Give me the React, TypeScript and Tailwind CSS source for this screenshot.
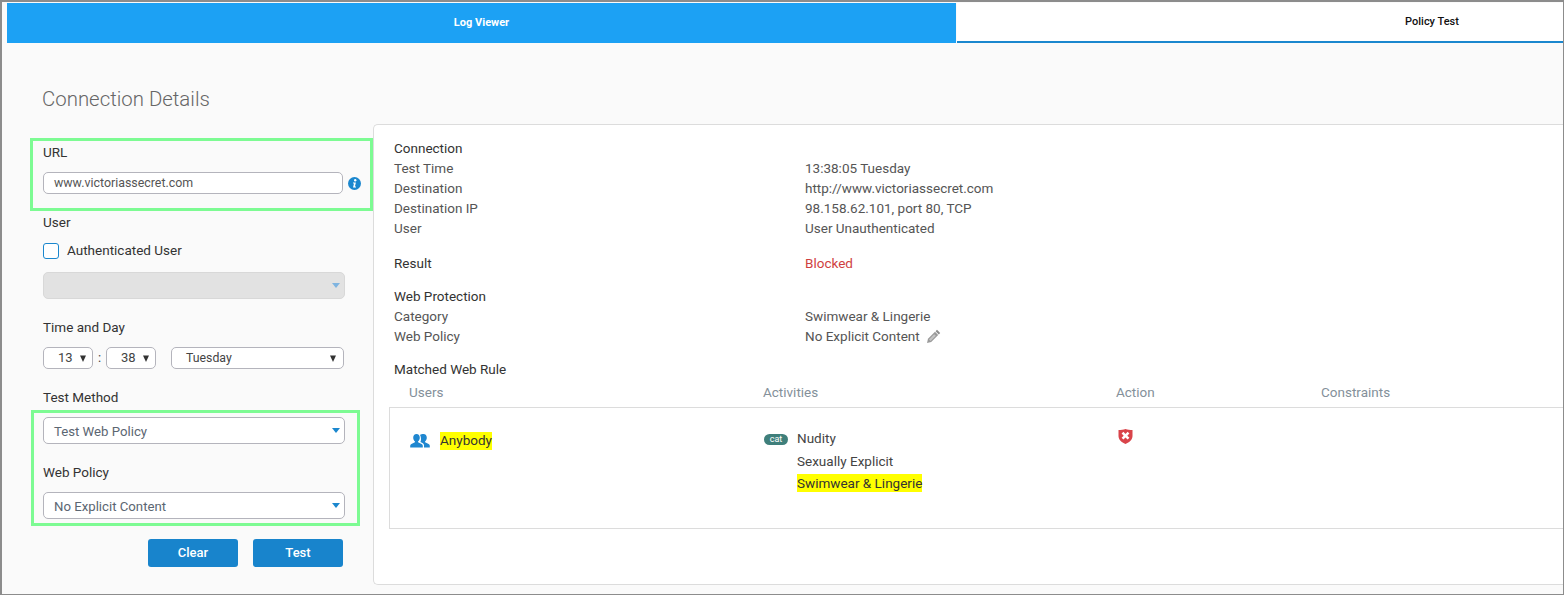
import type { ReactNode } from "react";

const Arrow = ({ color = "#1b87ce" }: { color?: string }) => (
  <svg width="8" height="5" viewBox="0 0 8 5" className="shrink-0">
    <path d="M0 0H8L4 5Z" fill={color} />
  </svg>
);

const SmallArrow = () => (
  <svg width="6" height="7" viewBox="0 0 6 7" className="shrink-0">
    <path d="M0 .5H6L3 7Z" fill="#333" />
  </svg>
);

function Label({ children, className = "" }: { children: ReactNode; className?: string }) {
  return <div className={`text-[13.5px] leading-5 text-[#333] ${className}`}>{children}</div>;
}

function BlueSelect({ value }: { value: string }) {
  return (
    <div className="flex items-center justify-between h-[27px] w-[302px] pl-[10px] pr-[4px] bg-white border border-[#b4b4bc] rounded-[5px] text-[13.2px] text-[#5b6672]">
      <span className="pt-[2px]">{value}</span>
      <span className="flex pb-px"><Arrow /></span>
    </div>
  );
}

function SmallSelect({ value, className }: { value: string; className: string }) {
  return (
    <div className={`flex items-center justify-between h-[22px] bg-white border border-[#b4b4bc] rounded-[5px] text-[#444] ${className}`}>
      <span>{value}</span>
      <SmallArrow />
    </div>
  );
}

function Row({ label, children }: { label: string; children: ReactNode }) {
  return (
    <div className="grid grid-cols-[411px_1fr] h-5 items-center text-[13.5px] text-[#555]">
      <span>{label}</span>
      <span>{children}</span>
    </div>
  );
}

export default function App() {
  return (
    <div className="w-[1564px] h-[595px] overflow-hidden bg-[#fafafa] border-t-2 border-l-2 border-r border-b border-[#8c8c8c] font-['Roboto',sans-serif]">
      {/* tabs */}
      <div className="flex h-[41px] ml-[5px] pt-px text-[11px]">
        <div className="w-[949px] flex items-center justify-center bg-[#1ca1f4] text-white font-bold">Log Viewer</div>
        <div className="flex-1 ml-px flex items-center justify-center pl-[344px] bg-white border-b-2 border-[#1b87ce] text-[#111] font-medium">Policy Test</div>
      </div>

      <div className="flex">
        {/* left form */}
        <div className="w-[371px] pl-[29px] shrink-0">
          <div className="h-[95px] pt-[42px] pl-[11px] text-[20.4px] leading-7 font-light text-[#666]">Connection Details</div>

          <div className="w-[343px] h-[73px] -ml-px border-[3px] border-[#7dfb93] pl-[10px] pt-[1px]">
            <Label>URL</Label>
            <div className="flex items-center gap-[5px] mt-[10px]">
              <div className="flex items-center w-[300px] h-[22px] pl-[10px] bg-white border border-[#b4b4bc] rounded-[5px] text-[12.4px] text-[#555]">www.victoriassecret.com</div>
              <svg width="13" height="13" viewBox="0 0 13 13">
                <circle cx="6.5" cy="6.5" r="6.5" fill="#1b87ce" />
                <circle cx="7.2" cy="3.2" r="1.2" fill="#fff" />
                <path d="M5 5.6H7.9L6.9 9.6H8V10.5H5L6 6.5H5Z" fill="#fff" />
              </svg>
            </div>
          </div>

          <div className="pl-3">
            <Label className="mt-[1px]">User</Label>
            <div className="flex items-center gap-2 mt-[11px] h-4">
              <span className="w-4 h-4 border-[1.5px] border-[#1b87ce] rounded-[3px] bg-white" />
              <span className="pb-[2px] text-[13.5px] text-[#333]">Authenticated User</span>
            </div>
            <div className="flex items-center justify-end h-[27px] w-[302px] mt-[13px] pr-[4px] bg-[#e2e2e2] border border-[#d8d8d8] rounded-[5px]">
              <Arrow color="#7fb4e0" />
            </div>
            <Label className="mt-[18px]">Time and Day</Label>
            <div className="flex items-center mt-[10px]">
              <SmallSelect value="13" className="w-[50px] pl-[14px] pr-[6px] text-[13px]" />
              <span className="w-[13px] text-center text-[13px] text-[#444]">:</span>
              <SmallSelect value="38" className="w-[50px] pl-[14px] pr-[6px] text-[13px]" />
              <SmallSelect value="Tuesday" className="w-[173px] ml-[15px] pl-[14px] pr-[7px] text-[12.3px]" />
            </div>
            <Label className="mt-[18px]">Test Method</Label>
          </div>

          <div className="w-[329px] h-[116px] mt-[3px] border-[3px] border-[#7dfb93] pl-[9px] pt-1">
            <BlueSelect value="Test Web Policy" />
            <Label className="mt-[18px]">Web Policy</Label>
            <div className="mt-[10px]"><BlueSelect value="No Explicit Content" /></div>
          </div>

          <div className="flex gap-[15px] ml-[117px] mt-[13px]">
            <button className="w-[90px] h-[28px] bg-[#1884cc] rounded-[3px] text-white text-[13px] font-medium">Clear</button>
            <button className="w-[90px] h-[28px] bg-[#1884cc] rounded-[3px] text-white text-[13px] font-medium">Test</button>
          </div>
        </div>

        {/* results card */}
        <div className="flex-1 mt-[81px] h-[461px] bg-white border-y border-l border-[#dcdcdc] rounded-l-[5px] pl-5 pt-[13px]">
          <Label>Connection</Label>
          <Row label="Test Time">13:38:05 Tuesday</Row>
          <Row label="Destination">http://www.victoriassecret.com</Row>
          <Row label="Destination IP">98.158.62.101, port 80, TCP</Row>
          <Row label="User">User Unauthenticated</Row>

          <div className="grid grid-cols-[411px_1fr] h-5 items-center text-[13.5px] mt-[15px]">
            <span className="text-[#333]">Result</span>
            <span className="text-[#cf3f3f]">Blocked</span>
          </div>

          <Label className="mt-[13px]">Web Protection</Label>
          <Row label="Category">Swimwear &amp; Lingerie</Row>
          <Row label="Web Policy">
            <span className="inline-flex items-center gap-[6px]">
              No Explicit Content
              <svg width="15" height="15" viewBox="0 0 15 15">
                <path d="M11 .8 14.2 4 12.8 5.4 9.6 2.2Z" fill="#8c8c8c" />
                <path d="M9 2.8 12.2 6 5.2 13 1 14 2 9.8Z" fill="#9a9a9a" />
                <path d="M8.2 5.2 9.8 6.8 4.6 12 3 10.4Z" fill="#c4c4c4" />
              </svg>
            </span>
          </Row>

          <Label className="mt-[13px]">Matched Web Rule</Label>
          <div className="grid grid-cols-[354px_353px_205px_1fr] h-[18px] mt-[3px] pl-[15px] items-center text-[13.5px] text-[#84909a]">
            <span>Users</span>
            <span>Activities</span>
            <span>Action</span>
            <span>Constraints</span>
          </div>

          <div className="grid grid-cols-[354px_353px_205px_1fr] -ml-[5px] mt-[7px] h-[122px] pl-5 pt-[21px] bg-white border-y border-l border-[#dcdcdc] text-[13.5px] text-[#444]">
            <div className="flex items-start gap-[10px] pt-[3px]">
              <svg width="20" height="15" viewBox="0 0 20 15" className="mt-[1px]">
                <path d="M6.5 1C8.6 1 9.8 2.7 9.8 4.7 9.8 6.2 9.1 7.6 8.1 8.3V9.2L11.6 11C12.4 11.4 12.8 12 12.8 12.8V14.5H.2V12.8C.2 12 .6 11.4 1.4 11L4.9 9.2V8.3C3.9 7.6 3.2 6.2 3.2 4.7 3.2 2.7 4.4 1 6.5 1Z" fill="#1f87d0" />
                <path d="M13.5 1C15.6 1 16.8 2.7 16.8 4.7 16.8 6.2 16.1 7.6 15.1 8.3V9.2L18.6 11C19.4 11.4 19.8 12 19.8 12.8V14.5H14V12.4C14 11.2 13.4 10.4 12.4 9.9L10.4 8.9C11 7.8 11.2 6.2 10.9 4.7 10.7 3.4 10.4 2.5 10 2 10.8 1.3 12.2 1 13.5 1Z" fill="#1f87d0" />
              </svg>
              <span className="flex items-center h-[18px] pb-[2px] bg-[#ffff00] text-[#333]">Anybody</span>
            </div>

            <div className="flex items-start gap-[10px]">
              <span className="flex items-center justify-center w-6 h-[11px] mt-[5px] rounded-full bg-[#3f7f7b] text-white text-[9px] leading-none">cat</span>
              <div className="flex flex-col -ml-px">
                <span className="h-[23px] leading-[18px]">Nudity</span>
                <span className="h-[22px] leading-[18px]">Sexually Explicit</span>
                <span className="flex items-center self-start h-[18px] bg-[#ffff00] text-[#333]">Swimwear &amp; Lingerie</span>
              </div>
            </div>

            <div className="pl-px">
              <svg width="15" height="15" viewBox="0 0 15 15">
                <path d="M.5 1C3 1 5.5.8 7.5 0 9.5.8 12 1 14.5 1V7C14.5 10.5 11.5 13.5 7.5 15 3.5 13.5.5 10.5.5 7Z" fill="#d9444a" />
                <path d="M3.6 4.6 5.4 2.8 7.5 4.9 9.6 2.8 11.4 4.6 9.3 6.7 11.4 8.8 9.6 10.6 7.5 8.5 5.4 10.6 3.6 8.8 5.7 6.7Z" fill="#fff" />
              </svg>
            </div>
            <div />
          </div>
        </div>
      </div>
    </div>
  );
}
